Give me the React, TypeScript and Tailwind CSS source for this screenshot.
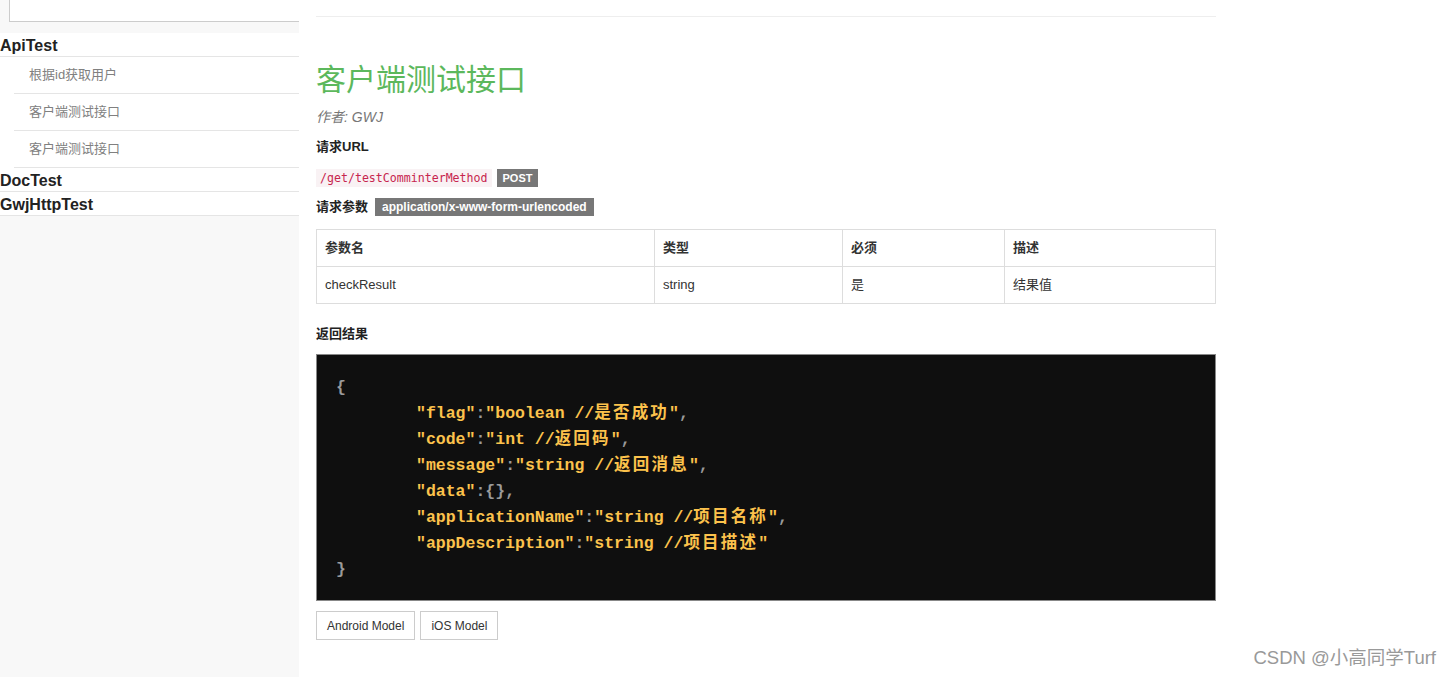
import React from "react";

const font = { fontFamily: '"Liberation Sans", Arial, "Noto Sans CJK SC", sans-serif' };

const subItems = ["根据id获取用户", "客户端测试接口", "客户端测试接口"];

const params = [{ name: "checkResult", type: "string", required: "是", desc: "结果值" }];

// CJK glyphs in the code block are a bit wider in the original
const withCjk = (s: string) =>
  s.split(/([\u4e00-\u9fff]+)/).map((part, i) =>
    /[\u4e00-\u9fff]/.test(part) ? (
      <span key={i} className="tracking-[2.2px]">
        {part}
      </span>
    ) : (
      part
    )
  );

const Str = ({ children }: { children: string }) => (
  <span className="text-[#fcc24c]">{withCjk(children)}</span>
);
const P = ({ children }: { children: React.ReactNode }) => (
  <span className="text-[#9a9a9a]">{children}</span>
);

const lines: [string, string, string][] = [
  ['"flag"', '"boolean //是否成功"', ","],
  ['"code"', '"int //返回码"', ","],
  ['"message"', '"string //返回消息"', ","],
  ['"data"', "{}", ","],
  ['"applicationName"', '"string //项目名称"', ","],
  ['"appDescription"', '"string //项目描述"', ""],
];

export default function App() {
  return (
    <div className="flex w-[1452px] h-[677px] bg-white text-[#333] relative overflow-hidden" style={font}>
      {/* Sidebar */}
      <aside className="w-[299px] shrink-0 bg-[#f8f8f8] h-full">
        <div className="h-[33px] pl-[9px]">
          <div className="h-[22px] bg-white border-l border-b border-[#ccc]" />
        </div>
        <div className="bg-white">
          <div className="h-[24px] border-b border-[#e5e5e5] text-[16px] font-bold text-[#222] leading-[25px]">ApiTest</div>
          <ul>
            {subItems.map((s, i) => (
              <li key={i} className="ml-[14px] h-[37px] border-b border-[#e5e5e5] pl-[15px] text-[13px] text-[#808080] leading-[36px]">
                {s}
              </li>
            ))}
          </ul>
          <div className="h-[24px] border-b border-[#e5e5e5] text-[16px] font-bold text-[#222] leading-[25px]">DocTest</div>
          <div className="h-[24px] border-b border-[#e5e5e5] text-[16px] font-bold text-[#222] leading-[25px]">GwjHttpTest</div>
        </div>
      </aside>

      {/* Main */}
      <main className="ml-[17px] w-[900px]">
        <div className="mt-[16px] border-t border-[#eee]" />
        <h1 className="mt-[45px] text-[30px] leading-[36px] text-[#5cb85c]">客户端测试接口</h1>
        <p className="mt-[10px] text-[14px] italic text-[#777] leading-[18px]">作者: GWJ</p>
        <p className="mt-[11px] text-[13px] font-bold text-[#222] leading-[20px]">请求URL</p>
        <div className="mt-[12px] flex items-center gap-[5px] h-[18px]">
          <code
            className="bg-[#f9f2f4] text-[#c7254e] text-[11.6px] px-[4px] leading-[18px]"
            style={{ fontFamily: '"DejaVu Sans Mono", monospace' }}
          >
            /get/testComminterMethod
          </code>
          <span className="bg-[#777] text-white text-[11px] font-bold px-[6px] leading-[18px]">POST</span>
        </div>
        <div className="mt-[11px] flex items-center gap-[7px] h-[18px]">
          <span className="text-[13px] font-bold text-[#222]">请求参数</span>
          <span className="bg-[#777] text-white text-[12px] font-bold px-[7px] leading-[18px]">application/x-www-form-urlencoded</span>
        </div>

        <table className="mt-[13px] w-[900px] border-collapse text-[13px] text-[#333]">
          <thead>
            <tr className="h-[37px]">
              <th className="w-[338px] border border-[#ddd] px-[8px] text-left font-bold">参数名</th>
              <th className="w-[188px] border border-[#ddd] px-[8px] text-left font-bold">类型</th>
              <th className="w-[162px] border border-[#ddd] px-[8px] text-left font-bold">必须</th>
              <th className="border border-[#ddd] px-[8px] text-left font-bold">描述</th>
            </tr>
          </thead>
          <tbody>
            {params.map((p) => (
              <tr key={p.name} className="h-[37px]">
                <td className="border border-[#ddd] px-[8px]">{p.name}</td>
                <td className="border border-[#ddd] px-[8px]">{p.type}</td>
                <td className="border border-[#ddd] px-[8px]">{p.required}</td>
                <td className="border border-[#ddd] px-[8px]">{p.desc}</td>
              </tr>
            ))}
          </tbody>
        </table>

        <p className="mt-[21px] text-[13px] font-bold text-[#222] leading-[18px]">返回结果</p>

        <pre
          className="mt-[11px] h-[247px] bg-[#0f0f0f] border border-[#888] pl-[19px] pt-[20px] text-[16.5px] font-bold leading-[26px]"
          style={{ fontFamily: '"Liberation Mono", "Noto Sans CJK SC", monospace' }}
        >
          <div className="h-[26px]"><P>{"{"}</P></div>
          {lines.map(([k, v, c]) => (
            <div key={k} className="pl-[80px] h-[26px]">
              <Str>{k}</Str>
              <P>:</P>
              {v === "{}" ? <P>{v}</P> : <Str>{v}</Str>}
              <P>{c}</P>
            </div>
          ))}
          <div className="h-[26px]"><P>{"}"}</P></div>
        </pre>

        <div className="mt-[10px] flex gap-[5px]">
          <button className="h-[29px] px-[10px] border border-[#ccc] bg-white text-[12px] text-[#333]">Android Model</button>
          <button className="h-[29px] px-[10px] border border-[#ccc] bg-white text-[12px] text-[#333]">iOS Model</button>
        </div>
      </main>

      <div className="absolute right-[16px] bottom-[8px] text-[18.5px] text-[#999] leading-[22px]">CSDN @小高同学Turf</div>
    </div>
  );
}
